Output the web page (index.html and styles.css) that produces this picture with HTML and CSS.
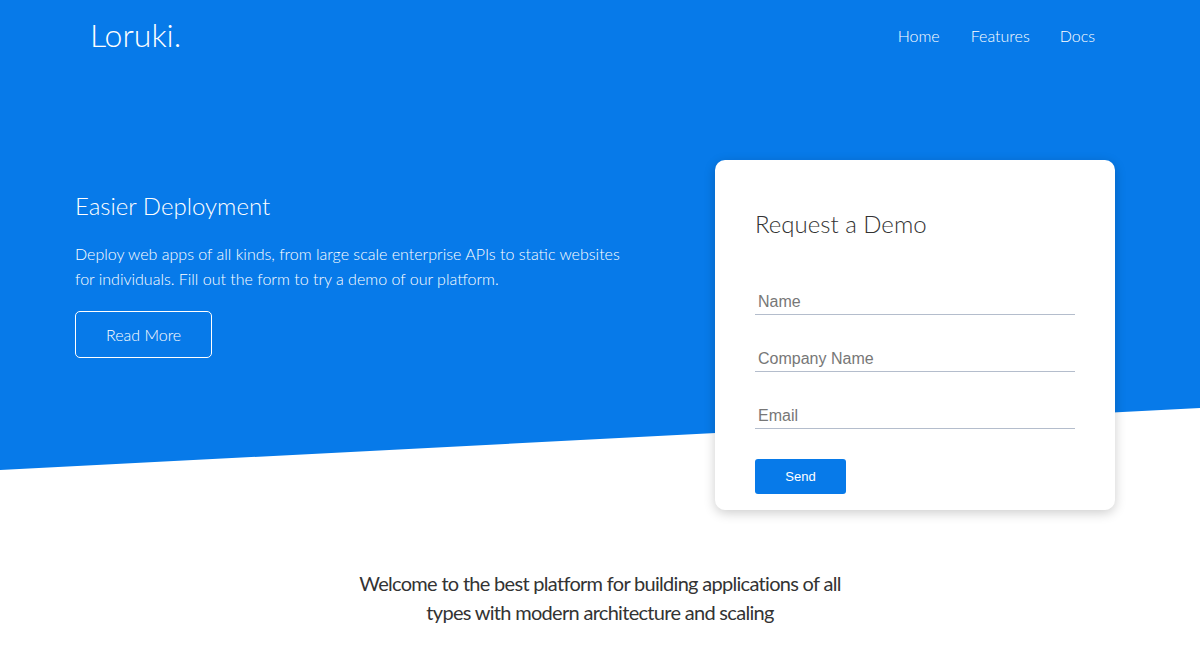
FILE: index.html
```html
<!DOCTYPE html>
<html lang="en">
<head>
<meta charset="utf-8">
<title>Loruki</title>
<link rel="stylesheet" href="styles.css">
</head>
<body>
<section class="hero">
  <div class="hero-bg"></div>
  <header class="navbar">
    <h1 class="logo">Loruki.</h1>
    <nav class="nav">
      <a href="#">Home</a>
      <a href="#">Features</a>
      <a href="#">Docs</a>
    </nav>
  </header>
  <div class="hero-inner">
    <div class="hero-text">
      <h2 class="hero-title">Easier Deployment</h2>
      <p class="hero-lead">Deploy web apps of all kinds, from large scale enterprise APIs to static websites for individuals. Fill out the form to try a demo of our platform.</p>
      <a href="#" class="btn-outline">Read More</a>
    </div>
    <div class="card">
      <h2 class="card-title">Request a Demo</h2>
      <form class="form">
        <input type="text" class="field" placeholder="Name">
        <input type="text" class="field" placeholder="Company Name">
        <input type="email" class="field" placeholder="Email">
        <button type="button" class="btn-send">Send</button>
      </form>
    </div>
  </div>
</section>
<section class="intro">
  <p class="intro-text">Welcome to the best platform for building applications of all types with modern architecture and scaling</p>
</section>
</body>
</html>
```
FILE: styles.css
```css
* { box-sizing: border-box; }
html, body { margin: 0; padding: 0; }
body {
  font-family: "Lato", "Liberation Sans", sans-serif;
  color: #333;
  background: #fff;
  overflow: hidden;
}
.hero {
  position: relative;
  height: 470px;
  color: #fff;
}
.hero-bg {
  position: absolute;
  inset: 0;
  background: #077ae9;
  clip-path: polygon(0 0, 100% 0, 100% 408px, 0 470px);
  z-index: 0;
}
.navbar {
  position: relative;
  z-index: 1;
  width: 1050px;
  margin: 0 auto;
  height: 71px;
  padding: 0 15px;
  display: flex;
  align-items: center;
  justify-content: space-between;
}
.logo {
  margin: 0;
  font-size: 32px;
  font-weight: 300;
  line-height: 1;
  padding-bottom: 2px;
}
.nav { display: flex; }
.nav a {
  color: #fff;
  text-decoration: none;
  font-size: 16px;
  font-weight: 300;
  padding: 0 15px;
}
.nav a:first-child { padding-right: 16px; }
.hero-inner {
  position: relative;
  z-index: 1;
  width: 1050px;
  margin: 0 auto;
  padding-top: 89px;
  display: flex;
  justify-content: space-between;
  align-items: flex-start;
}
.hero-text {
  width: 560px;
  margin-top: 31px;
}
.hero-title {
  margin: 0;
  font-size: 24px;
  font-weight: 300;
  line-height: 29px;
}
.hero-lead {
  margin: 21px 0 20px;
  font-size: 16px;
  font-weight: 300;
  line-height: 25px;
}
.btn-outline {
  display: inline-block;
  color: #fff;
  text-decoration: none;
  border: 1px solid #fff;
  border-radius: 5px;
  padding: 11px 30px;
  font-size: 16px;
  font-weight: 300;
  line-height: 23px;
}
.card {
  width: 400px;
  margin-right: 10px;
  background: #fff;
  color: #333;
  border-radius: 10px;
  box-shadow: 0 3px 12px rgba(0, 0, 0, 0.2);
  padding: 49px 40px 16px;
}
.card-title {
  margin: 0 0 50px;
  font-size: 24px;
  font-weight: 300;
  line-height: 29px;
}
.form { display: flex; flex-direction: column; align-items: flex-start; }
.field {
  display: block;
  width: 100%;
  font-family: "Liberation Sans", Arial, sans-serif;
  font-size: 16px;
  color: #333;
  border: none;
  border-bottom: 1px solid #b4bdcc;
  padding: 5px 3px 3px;
  margin: 0 0 30px;
  outline: none;
  background: transparent;
}
.field::placeholder { color: #777; }
.btn-send {
  width: 91px;
  height: 35px;
  border: none;
  border-radius: 3px;
  background: #077ae9;
  color: #fff;
  font-family: "Liberation Sans", Arial, sans-serif;
  font-size: 13px;
  cursor: pointer;
}
.intro {
  display: flex;
  justify-content: center;
  padding-top: 99px;
}
.intro-text {
  margin: 0;
  max-width: 500px;
  text-align: center;
  font-size: 20px;
  letter-spacing: -0.7px;
  line-height: 29px;
  color: #333;
}
```
